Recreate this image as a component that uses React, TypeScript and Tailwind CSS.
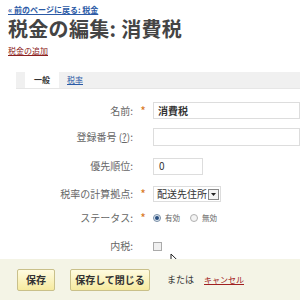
import React from 'react';

const font = { fontFamily: '"Noto Sans CJK JP", "DejaVu Sans", sans-serif' };

const Row = ({ label, required, children, h }: { label: React.ReactNode; required?: boolean; children: React.ReactNode; h: string }) => (
  <div className={`flex items-center ${h}`}>
    <div className="w-[133px] text-right text-[10px] text-[#666] leading-none">{label}</div>
    <div className="w-[20px] text-center text-[12px] text-[#d8781c] leading-none">{required ? '*' : ''}</div>
    <div className="flex-1 flex items-center">{children}</div>
  </div>
);

const App = () => {
  return <div className="w-[300px] h-[300px] overflow-hidden bg-white relative" style={font}>
      <div className="px-[8px] pt-[5px]">
        <div className="text-[8px] leading-[9px] h-[9px]">
          <a href="#" className="font-bold text-[#2b5aa6] underline">« 前のページに戻る: 税金</a>
        </div>
        <h1 className="mt-[5px] text-[20px] leading-[20px] h-[20px] font-bold text-[#444] tracking-[0.3px]">税金の編集: 消費税</h1>
        <div className="mt-[7px] text-[8px] leading-[9px] h-[9px]">
          <a href="#" className="text-[#8b2020] underline">税金の追加</a>
        </div>
      </div>
      <div className="ml-[16px] mt-[17px] h-[17px] bg-[#f0f0f0] border-b border-[#e6e6e6] flex items-end">
        <div className="ml-[9px] w-[34px] h-[17px] bg-white text-[8px] leading-none font-bold text-[#333] flex items-center justify-center">一般</div>
        <a href="#" className="ml-[8px] text-[8px] leading-none text-[#2b5aa6] underline h-[16px] flex items-center">税率</a>
      </div>
      <div className="mt-[13px]">
        <Row label="名前:" required h="h-[17px]">
          <div className="w-full h-[17px] border border-[#ddd] text-[10px] leading-none font-bold text-[#333] pl-[4px] flex items-center">消費税</div>
        </Row>
        <div className="h-[9px]" />
        <Row label={<span>登録番号 (<span className="underline">?</span>):</span>} h="h-[18px]">
          <div className="w-full h-[18px] border border-[#ddd]" />
        </Row>
        <div className="h-[11px]" />
        <Row label="優先順位:" h="h-[18px]">
          <div className="w-[50px] h-[17px] border border-[#ddd] text-[10px] leading-none text-[#333] pl-[5px] flex items-center">0</div>
        </Row>
        <div className="h-[11px]" />
        <Row label="税率の計算拠点:" required h="h-[16px]">
          <div className="flex items-center border border-[#ddd] h-[16px] pl-[3px] pr-[1px]">
            <span className="text-[10px] text-[#333] leading-none">配送先住所</span>
            <span className="ml-[1px] w-[11px] h-[11px] border border-[#888] bg-[#f4f4f4] flex items-center justify-center">
              <svg width="5" height="3" viewBox="0 0 5 3"><path d="M0 0h5L2.5 3z" fill="#222" /></svg>
            </span>
          </div>
        </Row>
        <div className="h-[8px]" />
        <Row label="ステータス:" required h="h-[16px]">
          <div className="flex items-center text-[7.5px] leading-none text-[#666]">
            <span className="w-[8px] h-[8px] rounded-full border border-[#7a8fa6] bg-[#dfe8f2] flex items-center justify-center"><span className="w-[4px] h-[4px] rounded-full bg-[#2a4f80]" /></span>
            <span className="ml-[4px]">有効</span>
            <span className="ml-[10px] w-[8px] h-[8px] rounded-full border border-[#b0b0b0] bg-[#f4f4f4]" />
            <span className="ml-[4px]">無効</span>
          </div>
        </Row>
        <div className="h-[12px]" />
        <Row label="内税:" h="h-[16px]">
          <span className="w-[9px] h-[9px] border border-[#aaa] bg-[#f0f0f0]" />
        </Row>
      </div>
      <svg className="absolute left-[170px] top-[253px]" width="12" height="18" viewBox="0 0 12 18">
        <path d="M1 1v14l3.5-3.5 2.5 5.5 2-1-2.5-5.3H11z" fill="#fff" stroke="#222" strokeWidth="1" />
      </svg>
      <div className="absolute left-0 right-0 top-[259px] h-[41px] bg-[#f4f4e6] flex items-center pl-[17px]">
        <button className="h-[22px] w-[38px] border border-[#c9c08a] rounded-[2px] bg-gradient-to-b from-[#fffbe0] to-[#f6ea9e] text-[10px] font-bold text-[#333] leading-none">保存</button>
        <button className="ml-[15px] h-[22px] w-[80px] border border-[#c9c08a] rounded-[2px] bg-gradient-to-b from-[#fffbe0] to-[#f6ea9e] text-[10px] font-bold text-[#333] leading-none">保存して閉じる</button>
        <span className="ml-[17px] text-[9px] leading-none text-[#333]">または</span>
        <a href="#" className="ml-[10px] text-[8px] leading-none text-[#a02020] underline">キャンセル</a>
      </div>
    </div>;
};
export default App;
